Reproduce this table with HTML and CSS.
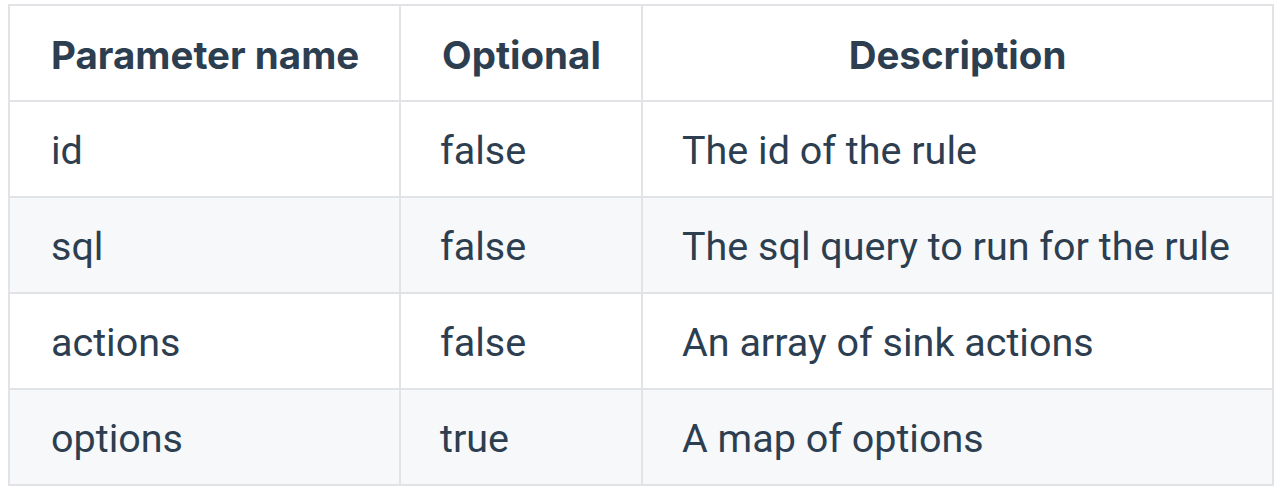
FILE: index.html
```html
<!DOCTYPE html>
<html lang="en">
<head>
<meta charset="utf-8">
<title>Parameters</title>
<link rel="stylesheet" href="styles.css">
</head>
<body>
<table class="params">
  <thead>
    <tr>
      <th class="col-name">Parameter name</th>
      <th class="col-opt">Optional</th>
      <th class="col-desc">Description</th>
    </tr>
  </thead>
  <tbody>
    <tr><td>id</td><td class="c2">false</td><td class="c3">The id of the rule</td></tr>
    <tr><td>sql</td><td class="c2">false</td><td class="c3">The sql query to run for the rule</td></tr>
    <tr><td>actions</td><td class="c2">false</td><td class="c3">An array of sink actions</td></tr>
    <tr><td>options</td><td class="c2">true</td><td class="c3">A map of options</td></tr>
  </tbody>
</table>
</body>
</html>
```
FILE: styles.css
```css
html, body {
  background: #ffffff;
}
body {
  margin: 4px 8px;
  font-family: Inter, "Noto Sans", sans-serif;
  color: #2c3e50;
}
.params {
  width: 1266px;
  border-collapse: collapse;
  table-layout: fixed;
}
.params th,
.params td {
  border: 2px solid #e1e3e6;
  height: 90px;
  padding: 4px 0 0 41px;
  line-height: 50px;
  text-align: left;
  vertical-align: middle;
  white-space: nowrap;
}
.params th {
  font-family: Inter, "Noto Sans", sans-serif;
  font-size: 38.5px;
  font-weight: 700;
}
.params th.col-desc {
  text-align: center;
  padding-left: 0;
}
.params td {
  font-family: Roboto, "Noto Sans", sans-serif;
  font-size: 39.5px;
  font-weight: 400;
}
.params td.c2,
.params td.c3 {
  padding-left: 39px;
}
.col-name { width: 348px; }
.col-opt { width: 199px; }
.params tbody tr:nth-child(2n) {
  background: #f6f8fa;
}
```
